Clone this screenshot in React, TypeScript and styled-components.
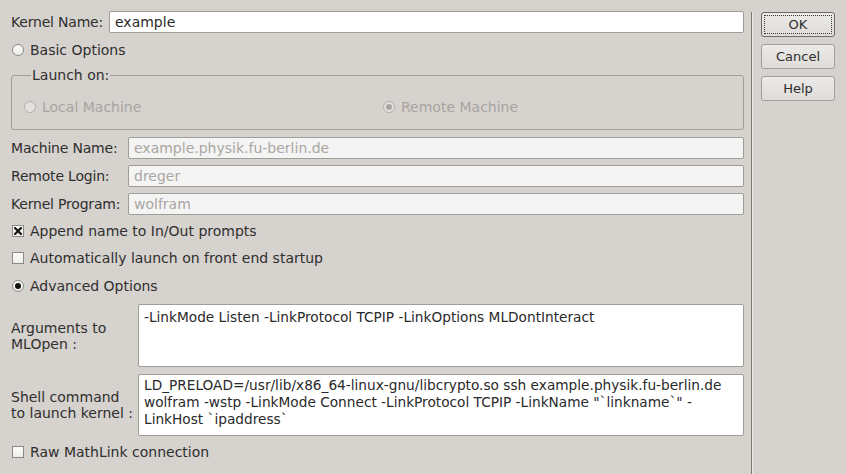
import React from "react";
import styled, { createGlobalStyle } from "styled-components";

const GlobalStyle = createGlobalStyle`
  html, body { margin: 0; padding: 0; }
  body {
    background: #d6d2ce;
    width: 846px;
    height: 474px;
    overflow: hidden;
    font-family: "DejaVu Sans", "Liberation Sans", sans-serif;
    font-size: 14px;
    color: #2f2f2f;
  }
`;

const Dialog = styled.div`
  display: flex;
  width: 846px;
  height: 474px;
  box-sizing: border-box;
`;

const Main = styled.div`
  width: 733px;
  padding: 11px 0 0 11px;
  display: flex;
  flex-direction: column;
`;

const Separator = styled.div`
  width: 1px;
  margin: 12px 0 0 7px;
  background: #7e7a76;
  box-shadow: 1px 0 0 #ebe9e7;
`;

const ButtonColumn = styled.div`
  display: flex;
  flex-direction: column;
  gap: 7px;
  padding: 12px 0 0 9px;
`;

const Button = styled.button<{ $default?: boolean }>`
  position: relative;
  width: 74px;
  height: 25px;
  box-sizing: border-box;
  border: 1px solid ${(p) => (p.$default ? "#6e6a66" : "#a29e9a")};
  border-radius: 3px;
  background: linear-gradient(#ecebe9, #dedbd8);
  font-family: "DejaVu Sans", sans-serif;
  font-size: 13px;
  color: #2e2e2e;
  padding: 0;
  &::after {
    content: "";
    display: ${(p) => (p.$default ? "block" : "none")};
    position: absolute;
    inset: 2px;
    border: 1px dotted #3a3a3a;
  }
`;

const FieldRow = styled.div<{ $mt?: number }>`
  display: flex;
  align-items: center;
  height: 22px;
  margin-top: ${(p) => p.$mt ?? 0}px;
`;

const Label = styled.div<{ $w: number }>`
  width: ${(p) => p.$w}px;
  flex: none;
  white-space: nowrap;
  letter-spacing: -0.2px;
`;

const TextBox = styled.div<{ $disabled?: boolean }>`
  flex: 1;
  height: 22px;
  box-sizing: border-box;
  border: 1px solid #a09c98;
  border-radius: 2px;
  background: ${(p) => (p.$disabled ? "#f4f4f4" : "#ffffff")};
  color: ${(p) => (p.$disabled ? "#aaa6a2" : "#2a2a2a")};
  padding: 0 5px;
  line-height: 20px;
  white-space: nowrap;
  overflow: hidden;
`;

const OptionRow = styled.div<{ $mt?: number; $disabled?: boolean }>`
  display: flex;
  align-items: center;
  gap: 6px;
  height: 20px;
  margin-top: ${(p) => p.$mt ?? 0}px;
  color: ${(p) => (p.$disabled ? "#a8a4a0" : "inherit")};
  white-space: nowrap;
`;

const RadioCircle = styled.span<{ $checked?: boolean; $disabled?: boolean }>`
  width: 12px;
  height: 12px;
  box-sizing: border-box;
  border-radius: 50%;
  border: 1px solid ${(p) => (p.$disabled ? "#b3afab" : "#8c8884")};
  background: ${(p) => (p.$disabled ? "#e4e1de" : "linear-gradient(#fbfbfb, #ecebe9)")};
  display: flex;
  align-items: center;
  justify-content: center;
  flex: none;
  margin-left: 1px;
  &::after {
    content: "";
    display: ${(p) => (p.$checked ? "block" : "none")};
    width: 6px;
    height: 6px;
    border-radius: 50%;
    background: ${(p) => (p.$disabled ? "#a8a4a0" : "#111")};
  }
`;

const CheckBox = styled.span`
  width: 12px;
  height: 12px;
  box-sizing: border-box;
  border: 1px solid #8c8884;
  background: linear-gradient(#fbfbfb, #efeeec);
  display: flex;
  align-items: center;
  justify-content: center;
  flex: none;
  margin-left: 1px;
`;

const Group = styled.fieldset`
  margin: 7px 0 0 0;
  padding: 13px 0 12px 11px;
  border: 1px solid #a19d99;
  border-radius: 3px;
  min-width: 0;
`;

const Legend = styled.legend`
  padding: 0 1px;
  margin-left: 8px;
  line-height: 17px;
`;

const GroupRadios = styled.div`
  display: flex;
`;

const GroupCell = styled.div<{ $w?: number }>`
  width: ${(p) => (p.$w ? `${p.$w}px` : "auto")};
`;

const AreaRow = styled.div<{ $mt?: number; $h: number }>`
  display: flex;
  align-items: center;
  height: ${(p) => p.$h}px;
  margin-top: ${(p) => p.$mt ?? 0}px;
`;

const AreaLabel = styled.div`
  width: 127px;
  flex: none;
  line-height: 16px;
`;

const TextArea = styled.div<{ $pt: number }>`
  flex: 1;
  align-self: stretch;
  box-sizing: border-box;
  border: 1px solid #a09c98;
  border-radius: 2px;
  background: #fff;
  padding: ${(p) => p.$pt}px 5px 0 5px;
  line-height: 17px;
  font-size: 13.7px;
  color: #2a2a2a;
  white-space: nowrap;
  overflow: hidden;
`;

const Line = styled.div``;

const Radio = ({ label, checked, disabled, mt }: { label: string; checked?: boolean; disabled?: boolean; mt?: number }) => (
  <OptionRow $mt={mt} $disabled={disabled}>
    <RadioCircle $checked={checked} $disabled={disabled} />
    <span>{label}</span>
  </OptionRow>
);

const Check = ({ label, checked, mt }: { label: string; checked?: boolean; mt?: number }) => (
  <OptionRow $mt={mt}>
    <CheckBox>
      {checked && (
        <svg width="8" height="8" viewBox="0 0 8 8">
          <path d="M1 1 L7 7 M7 1 L1 7" stroke="#111" strokeWidth="2.2" strokeLinecap="square" />
        </svg>
      )}
    </CheckBox>
    <span>{label}</span>
  </OptionRow>
);

export default function App() {
  return (
    <>
      <GlobalStyle />
      <Dialog>
        <Main>
          <FieldRow>
            <Label $w={98}>Kernel Name:</Label>
            <TextBox>example</TextBox>
          </FieldRow>
          <Radio label="Basic Options" mt={7} />
          <Group>
            <Legend>Launch on:</Legend>
            <GroupRadios>
              <GroupCell $w={359}>
                <Radio label="Local Machine" disabled />
              </GroupCell>
              <GroupCell>
                <Radio label="Remote Machine" disabled checked />
              </GroupCell>
            </GroupRadios>
          </Group>
          <FieldRow $mt={7}>
            <Label $w={117}>Machine Name:</Label>
            <TextBox $disabled>example.physik.fu-berlin.de</TextBox>
          </FieldRow>
          <FieldRow $mt={6}>
            <Label $w={117}>Remote Login:</Label>
            <TextBox $disabled>dreger</TextBox>
          </FieldRow>
          <FieldRow $mt={6}>
            <Label $w={117}>Kernel Program:</Label>
            <TextBox $disabled>wolfram</TextBox>
          </FieldRow>
          <Check label="Append name to In/Out prompts" checked mt={6} />
          <Check label="Automatically launch on front end startup" mt={7} />
          <Radio label="Advanced Options" checked mt={8} />
          <AreaRow $mt={8} $h={63}>
            <AreaLabel>
              <Line>Arguments to</Line>
              <Line>MLOpen :</Line>
            </AreaLabel>
            <TextArea $pt={4}>
              <Line>-LinkMode Listen -LinkProtocol TCPIP -LinkOptions MLDontInteract</Line>
            </TextArea>
          </AreaRow>
          <AreaRow $mt={7} $h={62}>
            <AreaLabel>
              <Line>Shell command</Line>
              <Line>to launch kernel :</Line>
            </AreaLabel>
            <TextArea $pt={2}>
              <Line>LD_PRELOAD=/usr/lib/x86_64-linux-gnu/libcrypto.so ssh example.physik.fu-berlin.de</Line>
              <Line>wolfram -wstp -LinkMode Connect -LinkProtocol TCPIP -LinkName "`linkname`" -</Line>
              <Line>LinkHost `ipaddress`</Line>
            </TextArea>
          </AreaRow>
          <Check label="Raw MathLink connection" mt={6} />
        </Main>
        <Separator />
        <ButtonColumn>
          <Button $default>OK</Button>
          <Button>Cancel</Button>
          <Button>Help</Button>
        </ButtonColumn>
      </Dialog>
    </>
  );
}
